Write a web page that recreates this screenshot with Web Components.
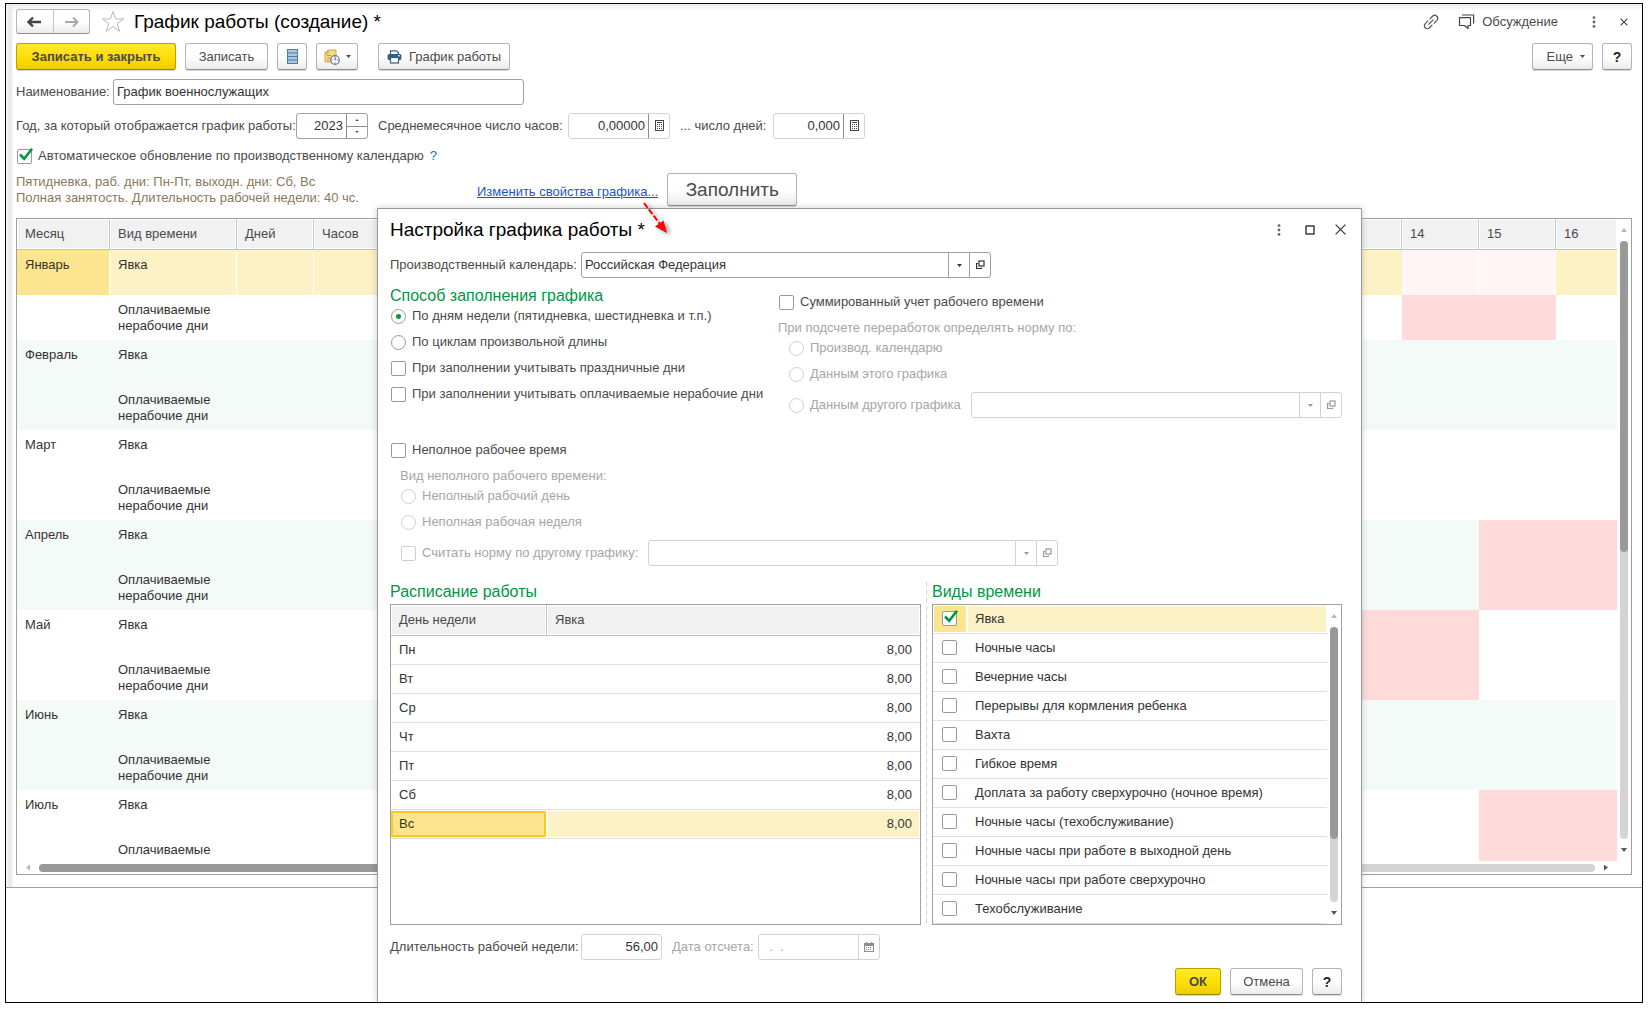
<!DOCTYPE html>
<html lang="ru">
<head>
<meta charset="utf-8">
<title>График работы (создание) *</title>
<meta name="viewport" content="width=device-width, initial-scale=1">
<style>
  html, body { margin: 0; background: #fff; }
  body {
    font: 13px/16px "Liberation Sans", Arial, sans-serif;
    color: #4a4a4a;
    --line: #a0a0a0;
    --line-soft: #d2d2d2;
    --green: #009646;
    --ink: #333;
    --muted: #a6a6a6;
    --row: #fdf1c6;
    --cell: #fde58f;
  }
</style>
</head>
<body>
<app-frame>
  <schedule-form></schedule-form>
  <settings-dialog slot="overlay"></settings-dialog>
  <callout-arrow slot="overlay"></callout-arrow>
</app-frame>

<script>
const ICONS = {
  back: '<svg width="15" height="12" viewBox="0 0 15 12"><path d="M6 1.500L1.500 6 6 10.500M2 6H14" fill="none" stroke="#444" stroke-width="2.400"/></svg>',
  forward: '<svg width="15" height="12" viewBox="0 0 15 12"><path d="M9 1.500L13.500 6 9 10.500M13 6H1" fill="none" stroke="#a9a9a9" stroke-width="2"/></svg>',
  star: '<svg width="24" height="23" viewBox="0 0 24 23"><path d="M12 1.500L14.600 9H22.500L16.200 13.600 18.600 21.300 12 16.600 5.400 21.300 7.800 13.600 1.500 9H9.400Z" fill="#fff" stroke="#b4b9bd" stroke-width="1"/></svg>',
  list: '<svg width="11" height="15" viewBox="0 0 11 15"><rect x=".5" y=".5" width="10" height="14" fill="#a9c9e0" stroke="#4f7d9f"/><path d="M1 4H10M1 7.500H10M1 11H10" stroke="#4f7d9f" stroke-width="1.200"/></svg>',
  report: '<svg width="16" height="16" viewBox="0 0 16 16"><path d="M4 1H12V13H1V4Z" fill="#f7d98a" stroke="#d0a549"/><path d="M4 1V4H1M3 6.500H7M3 9H6M3 11H5" fill="none" stroke="#c99b3b"/><circle cx="11" cy="11" r="4.300" fill="#fff" stroke="#4e86b8" stroke-width="1.200"/><path d="M11 8.500V11L12.500 10" fill="none" stroke="#3070a8"/><path d="M11 7.400V8.600M11 13.400V14.600M7.400 11H8.600M13.400 11H14.600" stroke="#e02020" stroke-width="1.200"/></svg>',
  print: '<svg width="15" height="14" viewBox="0 0 15 14"><path d="M3.500 4V.800H9.500L11.500 2.800V4" fill="#fff" stroke="#35607f" stroke-width="1.200"/><rect x=".6" y="4" width="13.800" height="6" rx="1.500" fill="#35607f"/><rect x="3.500" y="7.500" width="8" height="5.500" fill="#fff" stroke="#35607f" stroke-width="1.200"/><path d="M11 5.800H13" stroke="#fff"/></svg>',
  caret: '<svg width="5" height="3" viewBox="0 0 5 3"><path d="M0 0H5L2.500 3Z" fill="currentColor"/></svg>',
  chain: '<svg width="18" height="18" viewBox="0 0 18 18"><g transform="rotate(-45 9 9)" fill="none" stroke="#555" stroke-width="1.200" stroke-linecap="round"><path d="M7.500 12H3.800A3 3 0 0 1 3.800 6H7.500"/><path d="M10.500 6H14.200A3 3 0 0 1 14.200 12H10.500"/><path d="M6 9H12"/></g></svg>',
  chat: '<svg width="17" height="16" viewBox="0 0 17 16"><path d="M1.500 3.600H12.500V11.500H10V14.500L6.500 11.500H1.500Z" fill="none" stroke="#444" stroke-width="1.200" stroke-linejoin="round"/><path d="M4 1H15.600V9.500" fill="none" stroke="#444" stroke-width="1.200"/></svg>',
  dots: '<svg width="4" height="12" viewBox="0 0 4 12"><circle cx="2" cy="1.600" r="1.400" fill="#666"/><circle cx="2" cy="6" r="1.400" fill="#666"/><circle cx="2" cy="10.400" r="1.400" fill="#666"/></svg>',
  closeSmall: '<svg width="8" height="8" viewBox="0 0 8 8"><path d="M.6 .6L7.400 7.400M7.400 .6L.6 7.400" stroke="#444" stroke-width="1.100"/></svg>',
  close: '<svg width="11" height="11" viewBox="0 0 11 11"><path d="M.6 .6L10.400 10.400M10.400 .6L.6 10.400" stroke="#333" stroke-width="1.200"/></svg>',
  maximize: '<svg width="10" height="10" viewBox="0 0 10 10"><rect x="1" y="1" width="8" height="8" fill="none" stroke="#222" stroke-width="1.300"/></svg>',
  calc: '<svg width="9" height="12" viewBox="0 0 9 12"><rect x=".5" y=".5" width="8" height="10" fill="#fff" stroke="#444"/><path d="M2 2.500H7" stroke="#444"/><path d="M2 4.500H7M2 6.500H7M2 8.500H7" stroke="#444" stroke-dasharray="1 1"/></svg>',
  open: '<svg width="9" height="10" viewBox="0 0 9 10"><rect x="3" y="1" width="5" height="5" fill="none" stroke="currentColor" stroke-width="1.200"/><path d="M2 3.500H.6V8.500H5.500V7.500" fill="none" stroke="currentColor" stroke-width="1.200"/></svg>',
  calendar: '<svg width="10" height="10" viewBox="0 0 10 10"><rect x=".5" y="1.500" width="9" height="8" fill="#fff" stroke="#8d8d8d"/><rect x="0" y="1" width="10" height="3" fill="#8d8d8d"/><path d="M2.500 0V2M7.500 0V2" stroke="#8d8d8d"/><path d="M2 5.500H8M2 7.500H8" stroke="#8d8d8d" stroke-dasharray="1 1"/></svg>',
  tick: '<svg class="tick" width="17" height="16" viewBox="0 0 17 16"><path d="M3 6.500L7.200 10.800 15 .8" fill="none" stroke="#009646" stroke-width="2.600"/></svg>'
};

const RESET = `
  :host, *, *::before, *::after { box-sizing: border-box; }
  :host([hidden]) { display: none; }
  svg { display: block; flex: none; }
  button, input, select { font: inherit; color: inherit; margin: 0; }
  .bare { border: 0; background: none; padding: 0; display: flex; align-items: center; justify-content: center; }
`;

const CHECK = `
  .box { position: relative; display: block; width: 15px; height: 15px; flex: none; }
  .box input {
    appearance: none; display: block; width: 15px; height: 15px;
    border: 1px solid #999; border-radius: 2px; background: #fff;
  }
  .box input[type=radio] { border-radius: 50%; }
  .box input:disabled { border-color: #cfcfcf; }
  .box input[type=radio]:checked { background: radial-gradient(circle, #009646 0 2px, #fff 3px); }
  .tick { position: absolute; left: 0; top: -1px; display: none; pointer-events: none; }
  .box input[type=checkbox]:checked + .tick { display: block; }
`;

function define(name, css, html, setup) {
  customElements.define(name, class extends HTMLElement {
    connectedCallback() {
      if (this.shadowRoot) return;
      const root = this.attachShadow({ mode: 'open' });
      const body = typeof html === 'function' ? html(this) : html;
      root.innerHTML = `<style>${RESET}${css}</style>${body}`;
      if (setup) setup(this, root);
    }
  });
}

define('ui-button', `
  :host { display: inline-block; flex: none; }
  button {
    display: flex; align-items: center; justify-content: center; gap: 7px;
    width: 100%; height: 27px; padding: 0 12px; white-space: nowrap;
    border: 1px solid #b4b4b4; border-bottom-color: #8f8f8f; border-radius: 3px;
    background: linear-gradient(#fff 50%, #ebebeb);
    box-shadow: 0 1px 0 #d8d8d8;
  }
  :host([kind=primary]) button {
    font-weight: bold; border-color: #b9a100; border-bottom-color: #9c8800;
    background: linear-gradient(#ffe92e, #fddc00 60%, #ebcd00);
  }
  :host([kind=help]) button { font-weight: bold; font-size: 14px; color: #222; padding: 0; width: 30px; }
  :host([menu]) button { justify-content: flex-end; padding: 0 7px; }
  :host([kind=icon]) button { justify-content: center; padding: 0; gap: 6px; }
  :host([kind=large]) button { font-size: 19px; height: 33px; padding: 0 19px; }
`, el => `<button type="button"${el.title ? ` aria-label="${el.title}"` : ''}>${ICONS[el.getAttribute('icon')] || ''}<slot></slot>${el.hasAttribute('menu') ? ICONS.caret : ''}</button>`);

/* Tick box or radio with its caption. */
define('ui-check', `
  :host { display: block; padding-left: 1px; }
  label { display: flex; align-items: center; gap: 6px; min-height: 16px; white-space: nowrap; }
  :host([disabled]) { color: var(--muted); }
  ${CHECK}
`, el => {
  const type = el.getAttribute('type') || 'checkbox';
  return `<label><span class="box"><input type="${type}"${el.hasAttribute('checked') ? ' checked' : ''}${el.hasAttribute('disabled') ? ' disabled' : ''}>${ICONS.tick}</span><span><slot></slot></span></label>`;
});

/* Captioned text box with an optional side button: calc, calendar, spin. */
define('ui-field', `
  :host { display: flex; align-items: center; }
  label { width: var(--label, auto); white-space: nowrap; flex: none; }
  .frame {
    display: flex; width: var(--box, 100px); height: 26px; background: #fff; color: var(--ink);
    border: 1px solid var(--line); border-radius: 3px; overflow: hidden;
  }
  :host([soft]) .frame { border-color: var(--line-soft); }
  :host([disabled]) { color: var(--muted); }
  :host([disabled]) .frame { color: var(--muted); }
  input { flex: 1; min-width: 0; border: 0; outline: 0; background: none; padding: 0 3px; }
  :host([numeric]) input { text-align: right; }
  .side { width: 21px; flex: none; border-left: 1px solid #8c8c8c; }
  :host([disabled]) .side { border-color: var(--line-soft); }
  .spin { display: flex; flex-direction: column; }
  .spin button { flex: 1; color: #444; }
  .spin button + button { border-top: 1px solid #8c8c8c; }
  .spin svg { width: 4px; height: 2px; }
  .spin button:first-child svg { transform: rotate(180deg); }
`, el => {
  const side = el.getAttribute('side');
  const extra = side === 'spin'
    ? `<span class="side spin"><button class="bare" type="button" aria-label="Больше">${ICONS.caret}</button><button class="bare" type="button" aria-label="Меньше">${ICONS.caret}</button></span>`
    : side ? `<button class="bare side" type="button" aria-label="Выбрать">${ICONS[side]}</button>` : '';
  return `<label for="f"><slot></slot></label><span class="frame"><input id="f" type="text" value="${el.getAttribute('value') || ''}"${el.hasAttribute('disabled') ? ' disabled' : ''}>${extra}</span>`;
});

/* Reference picker: drop-down plus an "open" button. */
define('ui-picker', `
  :host { display: flex; align-items: center; }
  label { width: var(--label, auto); white-space: nowrap; flex: none; }
  .frame {
    flex: 0 1 var(--box, 410px); display: grid; grid-template-columns: 1fr 21px 21px; height: 26px;
    background: #fff; color: var(--ink); border: 1px solid var(--line); border-radius: 3px; overflow: hidden;
  }
  :host([fill]) .frame { flex: 1; }
  :host([disabled]) .frame { border-color: var(--line-soft); color: #999; }
  select { grid-area: 1 / 1 / 2 / 3; appearance: none; border: 0; outline: 0; background: none; padding: 0 24px 0 3px; opacity: 1; }
  .drop { grid-area: 1 / 2; pointer-events: none; display: flex; align-items: center; justify-content: center; border-left: 1px solid var(--line); }
  .open { grid-area: 1 / 3; border-left: 1px solid var(--line); }
  :host([disabled]) .drop, :host([disabled]) .open { border-color: var(--line-soft); }
`, el => {
  const caption = el.getAttribute('caption');
  const off = el.hasAttribute('disabled') ? ' disabled' : '';
  return `${caption ? `<label for="s">${caption}</label>` : ''}<span class="frame"><select id="s"${caption ? '' : ` aria-label="${el.title}"`}${off}><option>${el.getAttribute('value') || ''}</option></select><span class="drop">${ICONS.caret}</span><button class="bare open" type="button" aria-label="Открыть"${off}>${ICONS.open}</button></span>`;
});

/* Scroll rail; --size is the share of the rail taken by the thumb. */
define('scroll-rail', `
  :host { display: flex; flex-direction: column; align-items: center; width: 14px; padding: 9px 0; gap: 9px; }
  :host([across]) { flex-direction: row; width: auto; height: 13px; padding: 0 9px; gap: 9px; }
  .rail { flex: 1; width: 8px; border-radius: 4px; background: #d4d4d4; display: flex; flex-direction: inherit; }
  :host([across]) .rail { height: 8px; width: auto; }
  .thumb { flex: 0 0 var(--size, 50%); border-radius: 4px; background: #999; }
  i { width: 6px; height: 4px; background: #555; clip-path: polygon(0 0, 100% 0, 50% 100%); }
  i:first-of-type { background: #b8b8b8; clip-path: polygon(0 100%, 100% 100%, 50% 0); }
  :host([across]) i { width: 4px; height: 6px; clip-path: polygon(0 0, 100% 50%, 0 100%); }
  :host([across]) i:first-of-type { clip-path: polygon(100% 0, 100% 100%, 0 50%); }
`, '<i></i><div class="rail"><div class="thumb"></div></div><i></i>');

const HEAD = `
  th {
    height: 31px; padding: 0 8px; text-align: left; font-weight: normal; background: #f1f1f1;
    border-right: 1px solid #c6c6c6; border-bottom: 1px solid #c0c0c0; box-shadow: inset 0 0 0 1px #fff;
  }
  th:last-child { border-right: 0; }
`;

define('month-grid', `
  :host { display: grid; grid-template-columns: minmax(0, 1fr) 14px; border: 1px solid var(--line); background: #fff; }
  .view { height: 642px; overflow: hidden; }
  table { width: 100%; border-collapse: separate; border-spacing: 0; table-layout: fixed; }
  ${HEAD}
  td { height: 45px; padding: 7px 8px 6px; vertical-align: top; color: var(--ink); }
  tr.even { background: #f4faf7; }
  tr.current td { background: var(--row); border-right: 1px solid #fff; }
  tr.current td:nth-child(5), tr.current td:last-child { border-right: 0; }
  tr.current td:first-child { background: var(--cell); }
  tr.current td.off { background: #fff5f5; }
  td.off { background: #ffdada; }
`, () => {
  const months = ['Январь', 'Февраль', 'Март', 'Апрель', 'Май', 'Июнь', 'Июль'];
  /* Days off among the four trailing day columns, per month. */
  const off = { 0: [1, 2], 3: [2, 3], 4: [0, 1], 6: [2, 3] };
  const days = m => [0, 1, 2, 3].map(d => `<td${(off[m] || []).includes(d) ? ' class="off"' : ''}></td>`).join('');
  const rows = months.map((name, m) => {
    const tone = m % 2 ? 'even' : '';
    return `<tr class="${m ? tone : 'current'}"><td>${name}</td><td>Явка</td><td></td><td></td>${days(m)}</tr>
      <tr class="${tone}"><td></td><td>Оплачиваемые ${m < 6 ? '<br>нерабочие дни' : ''}</td><td></td><td></td>${days(m)}</tr>`;
  }).join('');
  return `<div class="view"><table>
    <colgroup><col style="width:93px"><col style="width:127px"><col style="width:77px"><col style="width:77px"><col><col style="width:77px"><col style="width:77px"><col style="width:61px"></colgroup>
    <thead><tr><th>Месяц</th><th>Вид времени</th><th>Дней</th><th>Часов</th><th></th><th>14</th><th>15</th><th>16</th></tr></thead>
    <tbody>${rows}</tbody></table></div>
    <scroll-rail style="--size:52%"></scroll-rail>
    <scroll-rail across style="--size:60%"></scroll-rail>`;
});

define('week-table', `
  :host { display: block; border: 1px solid var(--line); height: 321px; }
  table { width: 100%; border-collapse: separate; border-spacing: 0; table-layout: fixed; }
  col:first-child { width: 156px; }
  ${HEAD}
  td { height: 29px; padding: 0 8px; border-bottom: 1px solid #e0e0e0; color: var(--ink); }
  td:last-child { text-align: right; }
  tr.current td { background: var(--row); box-shadow: inset 0 0 0 1px #fff; }
  tr.current td:first-child { padding: 1px 1px 1px 0; background: #fff; box-shadow: none; }
  .focus { display: flex; align-items: center; height: 26px; padding: 0 6px; background: var(--cell); border: 2px solid #fbc81e; }
`, () => {
  const days = ['Пн', 'Вт', 'Ср', 'Чт', 'Пт', 'Сб'];
  return `<table><colgroup><col><col></colgroup><thead><tr><th>День недели</th><th>Явка</th></tr></thead><tbody>
    ${days.map(d => `<tr><td>${d}</td><td>8,00</td></tr>`).join('')}
    <tr class="current"><td><div class="focus">Вс</div></td><td>8,00</td></tr></tbody></table>`;
});

define('kinds-table', `
  :host { display: grid; grid-template-columns: minmax(0, 1fr) 14px; border: 1px solid var(--line); height: 321px; }
  table { width: 100%; border-collapse: separate; border-spacing: 0; table-layout: fixed; }
  col:first-child { width: 34px; }
  td { height: 29px; padding: 0 8px; border-bottom: 1px solid #e0e0e0; color: var(--ink); }
  td:first-child { padding: 0 9px 2px; }
  tr.current td { background: var(--row); box-shadow: inset 0 0 0 1px #fff; }
  tr.current td:first-child { background: var(--cell); }
  ${CHECK}
`, () => {
  const kinds = ['Явка', 'Ночные часы', 'Вечерние часы', 'Перерывы для кормления ребенка', 'Вахта', 'Гибкое время',
    'Доплата за работу сверхурочно (ночное время)', 'Ночные часы (техобслуживание)',
    'Ночные часы при работе в выходной день', 'Ночные часы при работе сверхурочно', 'Техобслуживание'];
  return `<table><colgroup><col><col></colgroup><tbody>${kinds.map((k, i) => `<tr${i ? '' : ' class="current"'}>
    <td><span class="box"><input type="checkbox" id="k${i}"${i ? '' : ' checked'}>${ICONS.tick}</span></td>
    <td><label for="k${i}">${k}</label></td></tr>`).join('')}</tbody></table>
    <scroll-rail style="--size:77%"></scroll-rail>`;
});

define('schedule-form', `
  :host {
    display: block; padding: 5px 10px 12px; border-bottom: 1px solid var(--line);
    background: linear-gradient(#e9e9e9, #fff0) top / 100% 7px no-repeat, linear-gradient(90deg, #f8f8f8, #e6e6e6 4px, #fff0) left / 8px 100% no-repeat;
  }
  .row { display: flex; align-items: center; }
  .grow { flex: 1; }
  .nav { display: flex; width: 74px; height: 25px; border: 1px solid #b4b4b4; border-bottom-color: #8f8f8f; border-radius: 3px; background: linear-gradient(#fff 50%, #ebebeb); }
  .nav button { flex: 1; }
  .nav button + button { border-left: 1px solid #c4c4c4; }
  .fav { margin: 0 9px 0 11px; }
  h1 { margin: 0; font-size: 19px; line-height: 24px; font-weight: normal; color: #000; }
  .talk { gap: 7px; margin: 0 34px 0 18px; }
  .tools { margin: 9px 0; gap: 9px; }
  .tools .print { margin-left: 11px; }
  .numbers { margin: 8px 0 9px; gap: 10px; }
  .help { color: #0a78c8; margin-left: 6px; text-decoration: none; }
  .summary { margin: 9px 0 12px; height: 33px; }
  .summary p { margin: 0; color: #87795b; width: 461px; }
  a.props { color: #1a56c4; margin-right: 9px; padding-top: 4px; }
`, `
  <div class="row">
    <div class="nav"><button class="bare" type="button" aria-label="Назад">${ICONS.back}</button><button class="bare" type="button" aria-label="Вперед">${ICONS.forward}</button></div>
    <button class="bare fav" type="button" aria-label="В избранное">${ICONS.star}</button>
    <h1>График работы (создание) *</h1>
    <span class="grow"></span>
    <button class="bare" type="button" aria-label="Ссылка">${ICONS.chain}</button>
    <button class="bare talk" type="button">${ICONS.chat}Обсуждение</button>
    <button class="bare" type="button" aria-label="Меню" style="margin-right:24px">${ICONS.dots}</button>
    <button class="bare" type="button" aria-label="Закрыть" style="margin-right:4px">${ICONS.closeSmall}</button>
  </div>
  <div class="row tools">
    <ui-button kind="primary" style="width:160px">Записать и закрыть</ui-button>
    <ui-button style="width:83px">Записать</ui-button>
    <ui-button kind="icon" icon="list" title="Список" style="width:30px"></ui-button>
    <ui-button kind="icon" icon="report" menu title="Отчеты" style="width:42px"></ui-button>
    <ui-button class="print" icon="print" style="width:132px">График работы</ui-button>
    <span class="grow"></span>
    <ui-button menu style="width:61px">Еще</ui-button>
    <ui-button kind="help">?</ui-button>
  </div>
  <ui-field value="График военнослужащих" style="--label:97px;--box:411px">Наименование:</ui-field>
  <div class="row numbers">
    <ui-field value="2023" numeric side="spin" style="--label:280px;--box:72px">Год, за который отображается график работы:</ui-field>
    <ui-field value="0,00000" numeric soft side="calc" style="--label:190px;--box:102px">Среднемесячное число часов:</ui-field>
    <ui-field class="days" value="0,000" numeric soft side="calc" style="--label:93px;--box:92px">... число дней:</ui-field>
  </div>
  <div class="row"><ui-check checked>Автоматическое обновление по производственному календарю</ui-check><a class="help" href="#help">?</a></div>
  <div class="row summary">
    <p>Пятидневка, раб. дни: Пн-Пт, выходн. дни: Сб, Вс<br>Полная занятость. Длительность рабочей недели: 40 чс.</p>
    <a class="props" href="#props">Изменить свойства графика...</a>
    <ui-button kind="large" style="width:130px">Заполнить</ui-button>
  </div>
  <month-grid></month-grid>
`);

define('settings-dialog', `
  :host {
    position: absolute; left: 371px; right: 280px; top: 204px; bottom: 0; display: block;
    padding: 0 19px 0 12px; background: #fff; border: 1px solid #999; border-bottom: 0;
    box-shadow: 0 0 7px #0003;
  }
  header { display: flex; align-items: center; height: 41px; margin-bottom: 2px; }
  h2 { margin: 0; flex: 1; font-size: 19px; line-height: 24px; font-weight: normal; color: #000; }
  header button { margin-left: 20px; }
  h3 { margin: 0; font-size: 16px; line-height: 20px; font-weight: normal; color: var(--green); }
  .modes { display: grid; grid-template-columns: 388px minmax(0, 1fr); margin-top: 8px; }
  .stack { display: flex; flex-direction: column; gap: 10px; }
  .modes .left .stack { margin-top: 2px; }
  .modes .right { padding-top: 8px; }
  .options { display: flex; flex-direction: column; gap: 10px; padding-left: 10px; }
  .group { display: flex; flex-direction: column; gap: 4px; }
  .muted { color: var(--muted); }
  .line { display: flex; align-items: center; gap: 10px; height: 26px; }
  .line ui-picker { flex: 1; }
  .part { margin-top: 24px; }
  .part .muted { padding-left: 10px; }
  .panels { display: grid; grid-template-columns: minmax(0, 1fr) 1px 410px; column-gap: 5px; margin-top: 16px; }
  .split { background: repeating-linear-gradient(#d4d4d4 0 5px, #fff 5px 8px); }
  .panels h3 { margin-bottom: 2px; }
  .totals { display: flex; gap: 10px; margin: 9px 0 8px; }
  footer { display: flex; justify-content: flex-end; gap: 9px; }
`, `
  <header>
    <h2>Настройка графика работы *</h2>
    <button class="bare" type="button" aria-label="Меню">${ICONS.dots}</button>
    <button class="bare" type="button" aria-label="Развернуть" style="margin-left:24px">${ICONS.maximize}</button>
    <button class="bare" type="button" aria-label="Закрыть" style="margin-right:-4px">${ICONS.close}</button>
  </header>
  <ui-picker caption="Производственный календарь:" value="Российская Федерация" style="--label:191px"></ui-picker>
  <div class="modes">
    <div class="left">
      <h3>Способ заполнения графика</h3>
      <div class="stack">
        <ui-check type="radio" checked>По дням недели (пятидневка, шестидневка и т.п.)</ui-check>
        <ui-check type="radio">По циклам произвольной длины</ui-check>
        <ui-check>При заполнении учитывать праздничные дни</ui-check>
        <ui-check>При заполнении учитывать оплачиваемые нерабочие дни</ui-check>
      </div>
    </div>
    <div class="right stack">
      <ui-check>Суммированный учет рабочего времени</ui-check>
      <div class="group">
        <div class="muted">При подсчете переработок определять норму по:</div>
        <div class="options">
          <ui-check type="radio" disabled>Производ. календарю</ui-check>
          <ui-check type="radio" disabled>Данным этого графика</ui-check>
          <div class="line"><ui-check type="radio" disabled>Данным другого графика</ui-check><ui-picker fill disabled title="Другой график"></ui-picker></div>
        </div>
      </div>
    </div>
  </div>
  <div class="stack part">
    <ui-check>Неполное рабочее время</ui-check>
    <div class="group">
      <div class="muted">Вид неполного рабочего времени:</div>
      <div class="options">
        <ui-check type="radio" disabled>Неполный рабочий день</ui-check>
        <ui-check type="radio" disabled>Неполная рабочая неделя</ui-check>
        <div class="line"><ui-check disabled>Считать норму по другому графику:</ui-check><ui-picker disabled title="График нормы"></ui-picker></div>
      </div>
    </div>
  </div>
  <div class="panels">
    <div><h3>Расписание работы</h3><week-table></week-table></div>
    <div class="split"></div>
    <div><h3>Виды времени</h3><kinds-table></kinds-table></div>
  </div>
  <div class="totals">
    <ui-field value="56,00" numeric soft style="--label:191px;--box:81px">Длительность рабочей недели:</ui-field>
    <ui-field value="  .  ." soft disabled side="calendar" style="--label:86px;--box:122px">Дата отсчета:</ui-field>
  </div>
  <footer>
    <ui-button kind="primary" style="width:46px">ОК</ui-button>
    <ui-button style="width:73px">Отмена</ui-button>
    <ui-button kind="help">?</ui-button>
  </footer>
`);

/* Red dashed pointer from the link to the dialog it opens. */
define('callout-arrow', `
  :host { position: absolute; left: 634px; top: 196px; pointer-events: none; }
  svg { filter: drop-shadow(3px 2px 2px #0006); }
`, `<svg width="34" height="38" viewBox="0 0 34 38"><path d="M4 3L20 24" stroke="#fe0000" stroke-width="2" stroke-dasharray="6 2"/><path d="M27 33L15 26.500 23.500 20.500Z" fill="#fe0000"/></svg>`);

define('app-frame', `
  :host {
    display: block; position: relative; overflow: hidden; background: #fff;
    margin: 3px 6px 0 5px; min-height: calc(100vh - 9px); border: 1px solid #000;
  }
`, '<slot></slot><slot name="overlay"></slot>');
</script>
</body>
</html>
